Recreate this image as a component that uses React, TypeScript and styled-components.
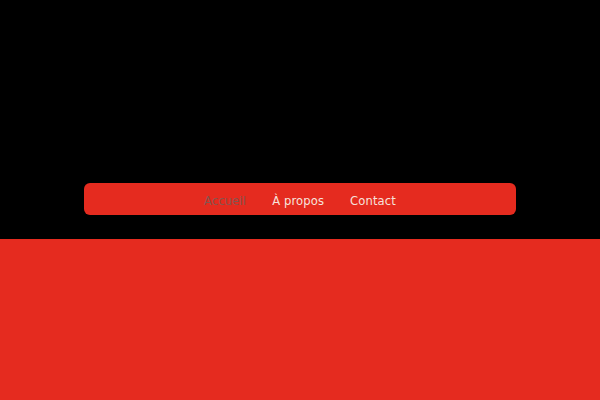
import React from "react";
import styled, { createGlobalStyle } from "styled-components";

const GlobalStyle = createGlobalStyle`
  * {
    box-sizing: border-box;
  }

  html,
  body {
    margin: 0;
    padding: 0;
    height: 100%;
    background-color: #e52b1f;
    font-family: "DejaVu Sans", Verdana, sans-serif;
  }

  #root {
    min-height: 100%;
  }
`;

const Page = styled.div`
  display: flex;
  flex-direction: column;
  min-height: 400px;
`;

const Header = styled.header`
  height: 239px;
  background-color: #000;
  display: flex;
  flex-direction: column;
  justify-content: flex-end;
  align-items: center;
  padding-bottom: 24px;
`;

const NavBar = styled.nav`
  width: 432px;
  height: 32px;
  border-radius: 6px;
  background-color: #e52b1f;
  display: flex;
  justify-content: center;
  align-items: center;
  gap: 26px;
  padding-top: 3px;
`;

const NavLink = styled.a<{ $active?: boolean }>`
  font-size: 11.6px;
  letter-spacing: 0.1px;
  color: ${(props) => (props.$active ? "#85554f" : "#f6e2dc")};
  text-decoration: none;
  cursor: pointer;
`;

const Main = styled.main`
  flex: 1;
  background-color: #e52b1f;
`;

const links = ["Accueil", "À propos", "Contact"];

function App() {
  return (
    <>
      <GlobalStyle />
      <Page>
        <Header>
          <NavBar>
            {links.map((label, idx) => (
              <NavLink key={label} $active={idx === 0}>
                {label}
              </NavLink>
            ))}
          </NavBar>
        </Header>
        <Main />
      </Page>
    </>
  );
}

export default App;
